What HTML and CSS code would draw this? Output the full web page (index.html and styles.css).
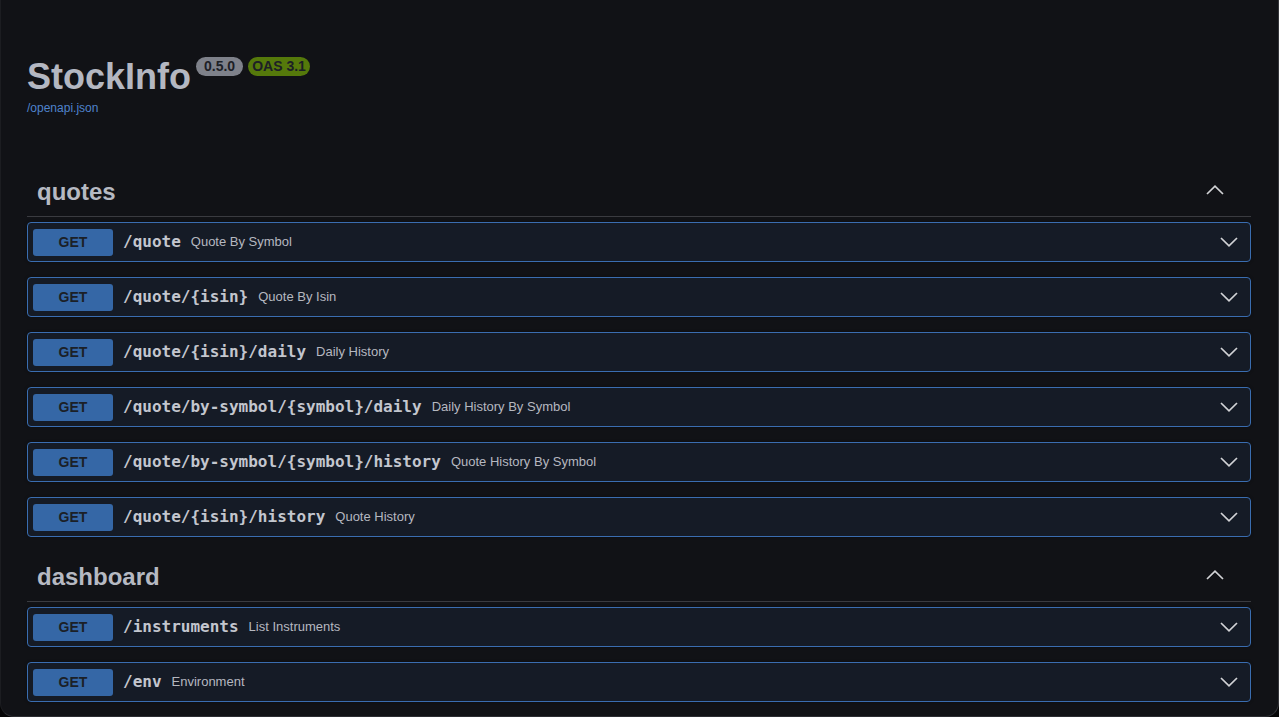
FILE: index.html
```html
<!DOCTYPE html>
<html lang="en">
<head>
<meta charset="utf-8">
<title>StockInfo</title>
<link rel="stylesheet" href="styles.css">
</head>
<body>
<div class="frame">
  <div class="info">
    <div class="title-row">
      <h2 class="title">StockInfo</h2>
      <span class="badge badge-version">0.5.0</span>
      <span class="badge badge-oas">OAS 3.1</span>
    </div>
    <a class="spec-link" href="#">/openapi.json</a>
  </div>

  <section class="tag-section">
    <div class="tag-header">
      <h3 class="tag-name">quotes</h3>
      <svg class="arrow-up" width="18" height="10" viewBox="0 0 18 10"><polyline points="1,9 9,1.2 17,9" /></svg>
    </div>
    <div class="opblock"><span class="method">GET</span><span class="path">/quote</span><span class="summary">Quote By Symbol</span><svg class="arrow-down" width="18" height="10" viewBox="0 0 18 10"><polyline points="1,1 9,8.8 17,1" /></svg></div>
    <div class="opblock"><span class="method">GET</span><span class="path">/quote/{isin}</span><span class="summary">Quote By Isin</span><svg class="arrow-down" width="18" height="10" viewBox="0 0 18 10"><polyline points="1,1 9,8.8 17,1" /></svg></div>
    <div class="opblock"><span class="method">GET</span><span class="path">/quote/{isin}/daily</span><span class="summary">Daily History</span><svg class="arrow-down" width="18" height="10" viewBox="0 0 18 10"><polyline points="1,1 9,8.8 17,1" /></svg></div>
    <div class="opblock"><span class="method">GET</span><span class="path">/quote/by-symbol/{symbol}/daily</span><span class="summary">Daily History By Symbol</span><svg class="arrow-down" width="18" height="10" viewBox="0 0 18 10"><polyline points="1,1 9,8.8 17,1" /></svg></div>
    <div class="opblock"><span class="method">GET</span><span class="path">/quote/by-symbol/{symbol}/history</span><span class="summary">Quote History By Symbol</span><svg class="arrow-down" width="18" height="10" viewBox="0 0 18 10"><polyline points="1,1 9,8.8 17,1" /></svg></div>
    <div class="opblock"><span class="method">GET</span><span class="path">/quote/{isin}/history</span><span class="summary">Quote History</span><svg class="arrow-down" width="18" height="10" viewBox="0 0 18 10"><polyline points="1,1 9,8.8 17,1" /></svg></div>
  </section>

  <section class="tag-section">
    <div class="tag-header">
      <h3 class="tag-name">dashboard</h3>
      <svg class="arrow-up" width="18" height="10" viewBox="0 0 18 10"><polyline points="1,9 9,1.2 17,9" /></svg>
    </div>
    <div class="opblock"><span class="method">GET</span><span class="path">/instruments</span><span class="summary">List Instruments</span><svg class="arrow-down" width="18" height="10" viewBox="0 0 18 10"><polyline points="1,1 9,8.8 17,1" /></svg></div>
    <div class="opblock"><span class="method">GET</span><span class="path">/env</span><span class="summary">Environment</span><svg class="arrow-down" width="18" height="10" viewBox="0 0 18 10"><polyline points="1,1 9,8.8 17,1" /></svg></div>
  </section>
</div>
</body>
</html>
```

FILE: styles.css
```css
html, body {
  margin: 0;
  padding: 0;
  background: #050506;
}

body {
  font-family: "Liberation Sans", Arial, sans-serif;
  overflow: hidden;
}

.frame {
  box-sizing: border-box;
  height: 717px;
  background: #111216;
  border: 1px solid #1c1d21;
  border-right-color: #34353a;
  border-bottom-color: #2c2d32;
  border-top: none;
  border-radius: 0 0 14px 14px;
  padding: 55px 27px 0 26px;
  overflow: hidden;
}

.info {
  margin-bottom: 52px;
}

.title-row {
  display: flex;
  align-items: flex-start;
  height: 44px;
}

.title {
  margin: 0;
  font-size: 36px;
  line-height: 44px;
  font-weight: 700;
  color: #b4b7c1;
}

.badge {
  margin-top: 2px;
  height: 19px;
  line-height: 19px;
  border-radius: 10px;
  font-size: 14px;
  font-weight: 700;
  color: #1d2026;
}

.badge-version {
  margin-left: 5px;
  padding: 0 8px;
  background: #7e818a;
}

.badge-oas {
  margin-left: 5px;
  padding: 0 4px;
  background: #55790b;
}

.spec-link {
  display: block;
  margin-top: 2px;
  font-size: 12px;
  line-height: 14px;
  color: #4f83cc;
  text-decoration: none;
}

.tag-header {
  display: flex;
  align-items: center;
  justify-content: space-between;
  padding: 10px 27px 10px 10px;
  border-bottom: 1px solid #3a3b40;
  margin-bottom: 5px;
}

.tag-name {
  margin: 0;
  font-size: 24px;
  line-height: 29px;
  font-weight: 700;
  color: #b6b9c2;
}

.arrow-up,
.arrow-down {
  display: block;
  fill: none;
  stroke: #d2d3d6;
  stroke-width: 1.7;
}

.arrow-up {
  margin-top: -4px;
}

.opblock {
  box-sizing: border-box;
  display: flex;
  align-items: center;
  height: 40px;
  margin-bottom: 15px;
  padding: 0 12px 0 5px;
  background: #151b26;
  border: 1px solid #3a6db0;
  border-radius: 4px;
  box-shadow: 0 0 3px rgba(0, 0, 0, 0.35);
}

.method {
  box-sizing: border-box;
  width: 80px;
  height: 27px;
  line-height: 27px;
  text-align: center;
  background: #3567a6;
  border-radius: 3px;
  font-size: 14px;
  font-weight: 700;
  color: #1b1f27;
}

.path,
.summary {
  position: relative;
  top: -1px;
}

.path {
  margin-left: 10px;
  font-family: "DejaVu Sans Mono", "Liberation Mono", monospace;
  font-size: 16px;
  font-weight: 700;
  color: #c3c6ce;
}

.summary {
  margin-left: 10px;
  font-size: 13px;
  color: #b5b8c0;
  flex: 1;
}
```
